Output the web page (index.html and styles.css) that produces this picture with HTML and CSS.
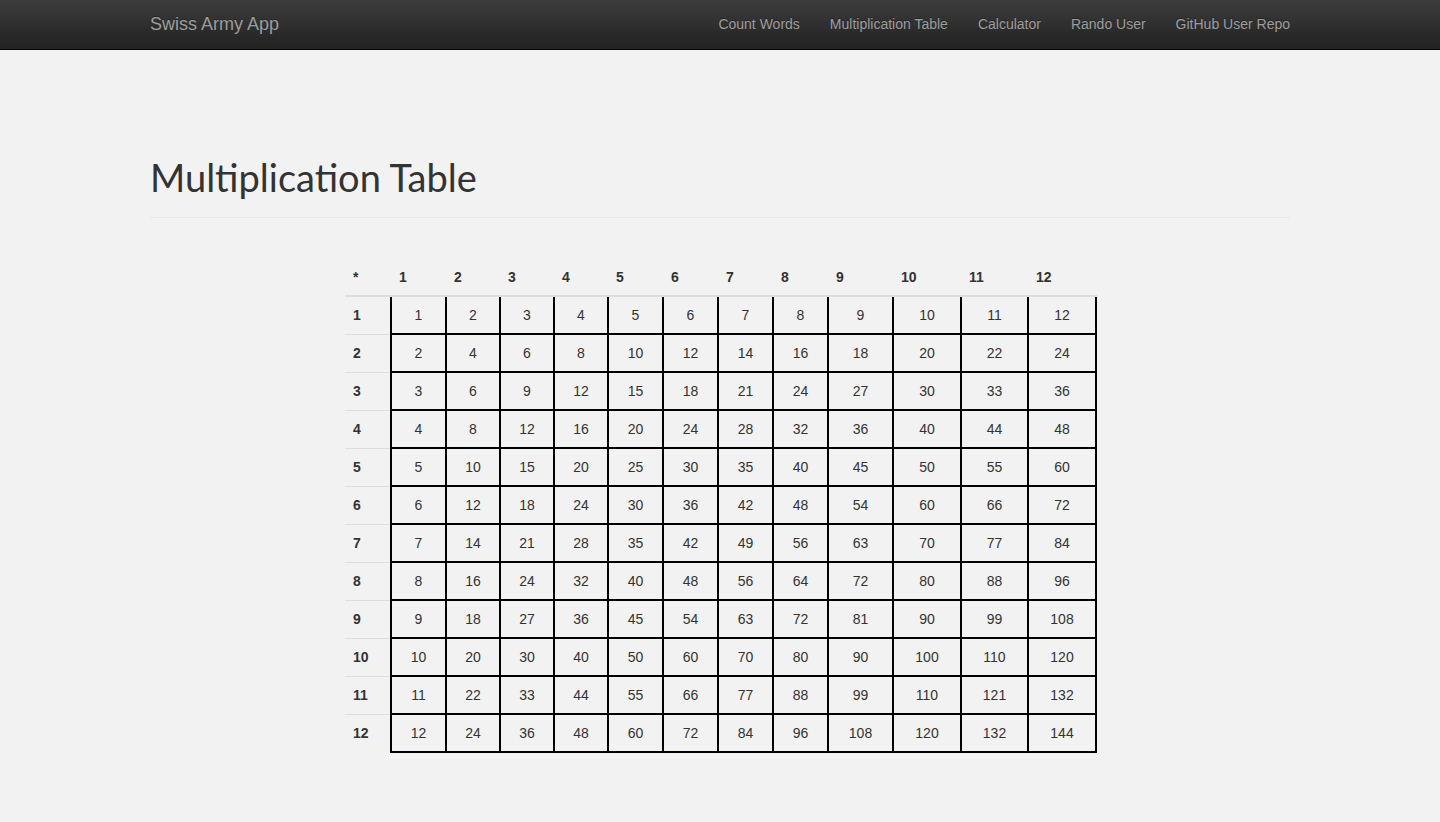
FILE: index.html
```html
<!DOCTYPE html>
<html lang="en">
<head>
<meta charset="utf-8">
<title>Swiss Army App</title>
<link rel="stylesheet" href="styles.css">
</head>
<body>
<nav class="navbar">
  <div class="nav-inner">
    <a class="brand" href="#">Swiss Army App</a>
    <ul class="nav-links">
      <li><a href="#">Count Words</a></li>
      <li><a href="#">Multiplication Table</a></li>
      <li><a href="#">Calculator</a></li>
      <li><a href="#">Rando User</a></li>
      <li><a href="#">GitHub User Repo</a></li>
    </ul>
  </div>
</nav>
<main class="container">
  <div class="page-header">
    <h1>Multiplication Table</h1>
  </div>
  <div class="table-wrap">
    <table class="mult">
      <colgroup>
        <col class="c-head"><col class="c-a"><col class="c-b"><col class="c-b"><col class="c-b"><col class="c-a"><col class="c-a"><col class="c-a"><col class="c-a"><col class="c-c"><col class="c-d"><col class="c-e"><col class="c-d">
      </colgroup>
      <thead>
        <tr><th>*</th><th>1</th><th>2</th><th>3</th><th>4</th><th>5</th><th>6</th><th>7</th><th>8</th><th>9</th><th>10</th><th>11</th><th>12</th></tr>
      </thead>
      <tbody>
        <tr><th>1</th><td>1</td><td>2</td><td>3</td><td>4</td><td>5</td><td>6</td><td>7</td><td>8</td><td>9</td><td>10</td><td>11</td><td>12</td></tr>
        <tr><th>2</th><td>2</td><td>4</td><td>6</td><td>8</td><td>10</td><td>12</td><td>14</td><td>16</td><td>18</td><td>20</td><td>22</td><td>24</td></tr>
        <tr><th>3</th><td>3</td><td>6</td><td>9</td><td>12</td><td>15</td><td>18</td><td>21</td><td>24</td><td>27</td><td>30</td><td>33</td><td>36</td></tr>
        <tr><th>4</th><td>4</td><td>8</td><td>12</td><td>16</td><td>20</td><td>24</td><td>28</td><td>32</td><td>36</td><td>40</td><td>44</td><td>48</td></tr>
        <tr><th>5</th><td>5</td><td>10</td><td>15</td><td>20</td><td>25</td><td>30</td><td>35</td><td>40</td><td>45</td><td>50</td><td>55</td><td>60</td></tr>
        <tr><th>6</th><td>6</td><td>12</td><td>18</td><td>24</td><td>30</td><td>36</td><td>42</td><td>48</td><td>54</td><td>60</td><td>66</td><td>72</td></tr>
        <tr><th>7</th><td>7</td><td>14</td><td>21</td><td>28</td><td>35</td><td>42</td><td>49</td><td>56</td><td>63</td><td>70</td><td>77</td><td>84</td></tr>
        <tr><th>8</th><td>8</td><td>16</td><td>24</td><td>32</td><td>40</td><td>48</td><td>56</td><td>64</td><td>72</td><td>80</td><td>88</td><td>96</td></tr>
        <tr><th>9</th><td>9</td><td>18</td><td>27</td><td>36</td><td>45</td><td>54</td><td>63</td><td>72</td><td>81</td><td>90</td><td>99</td><td>108</td></tr>
        <tr><th>10</th><td>10</td><td>20</td><td>30</td><td>40</td><td>50</td><td>60</td><td>70</td><td>80</td><td>90</td><td>100</td><td>110</td><td>120</td></tr>
        <tr><th>11</th><td>11</td><td>22</td><td>33</td><td>44</td><td>55</td><td>66</td><td>77</td><td>88</td><td>99</td><td>110</td><td>121</td><td>132</td></tr>
        <tr><th>12</th><td>12</td><td>24</td><td>36</td><td>48</td><td>60</td><td>72</td><td>84</td><td>96</td><td>108</td><td>120</td><td>132</td><td>144</td></tr>
      </tbody>
    </table>
  </div>
</main>
</body>
</html>
```
FILE: styles.css
```css
* { box-sizing: border-box; }

body {
  margin: 0;
  background: #f2f2f2;
  font-family: "Liberation Sans", Arial, sans-serif;
  font-size: 14px;
  line-height: 1.42857;
  color: #333;
}

a { text-decoration: none; }

.navbar {
  height: 50px;
  border-bottom: 1px solid #080808;
  background: linear-gradient(to bottom, #3c3c3c 0%, #222 100%);
}

.nav-inner {
  width: 1140px;
  height: 100%;
  margin: 0 auto;
  display: flex;
  align-items: center;
  justify-content: space-between;
}

.brand {
  font-size: 18px;
  line-height: 20px;
  color: #9d9d9d;
  text-shadow: 0 -1px 0 rgba(0, 0, 0, .25);
  margin-top: -1px;
}

.nav-links {
  display: flex;
  list-style: none;
  margin: -2px -15px 0 0;
  padding: 0;
}

.nav-links a {
  display: block;
  padding: 15px;
  line-height: 20px;
  color: #9d9d9d;
  text-shadow: 0 -1px 0 rgba(0, 0, 0, .25);
}

.container {
  width: 1140px;
  margin: 0 auto;
}

.page-header {
  margin-top: 106px;
  padding-bottom: 9px;
  border-bottom: 1px solid #e9e9e9;
}

.page-header h1 {
  margin: 0 0 10px;
  font-family: "Lato", "Open Sans", sans-serif;
  font-weight: 400;
  font-size: 38px;
  line-height: 42px;
  color: #333;
}

.table-wrap {
  width: 750px;
  margin: 41px auto 0;
}

.mult {
  width: 751px;
  border-collapse: collapse;
  border-spacing: 0;
  table-layout: fixed;
}

.mult th,
.mult td {
  padding: 8px;
  line-height: 20px;
  vertical-align: top;
  border-top: 1px solid #ddd;
}

.mult thead th {
  text-align: left;
  vertical-align: bottom;
  border-top: 0;
  border-bottom: 2px solid #ddd;
}

.mult tbody th {
  text-align: left;
}

.mult tbody td {
  text-align: center;
  border: 2px solid #000;
}

.c-head { width: 46px; }
.c-a { width: 55px; }
.c-b { width: 54px; }
.c-c { width: 65px; }
.c-d { width: 68px; }
.c-e { width: 67px; }
```
